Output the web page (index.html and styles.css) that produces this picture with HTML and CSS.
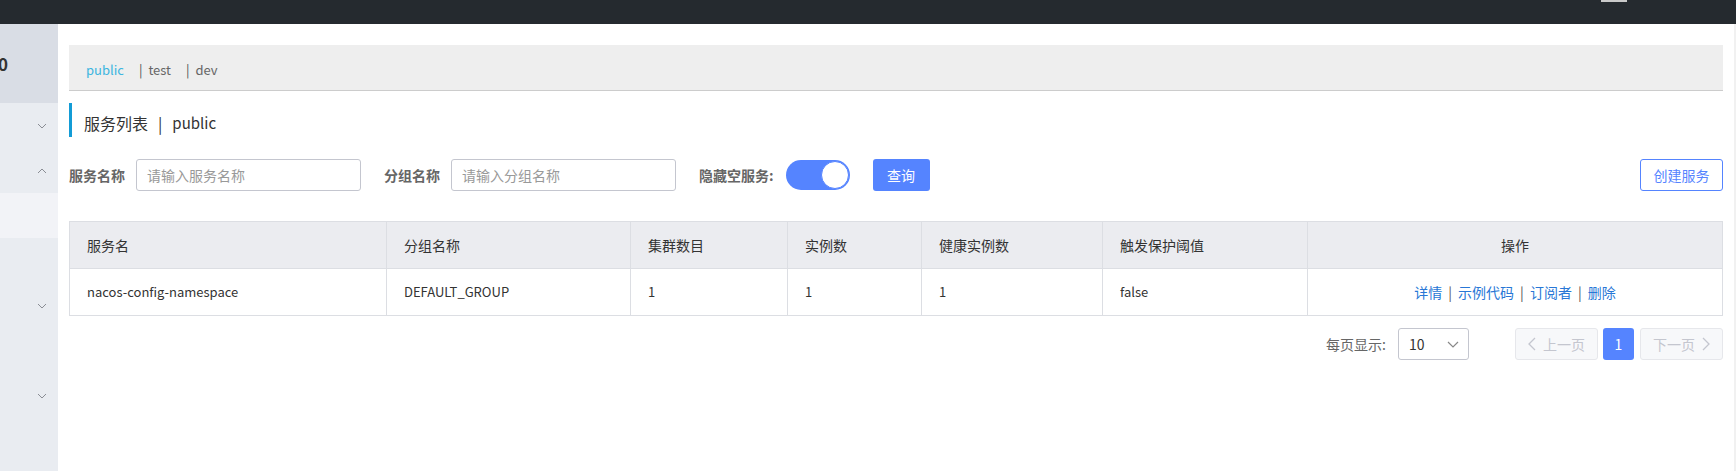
FILE: index.html
```html
<!DOCTYPE html>
<html lang="zh-CN">
<head>
<meta charset="utf-8">
<title>服务列表</title>
<link rel="stylesheet" href="styles.css">
</head>
<body>
<div class="topbar"><span class="top-ind"></span></div>
<div class="layout">
  <aside class="sidebar">
    <div class="sb-head"><span class="sb-ver">0</span></div>
    <div class="sb-item"><svg class="chev" viewBox="0 0 10 6"><polyline points="1,1 5,5 9,1"/></svg></div>
    <div class="sb-item"><svg class="chev" viewBox="0 0 10 6"><polyline points="1,5 5,1 9,5"/></svg></div>
    <div class="sb-item sb-sel"></div>
    <div class="sb-item"></div>
    <div class="sb-item"><svg class="chev" viewBox="0 0 10 6"><polyline points="1,1 5,5 9,1"/></svg></div>
    <div class="sb-item"></div>
    <div class="sb-item"><svg class="chev" viewBox="0 0 10 6"><polyline points="1,1 5,5 9,1"/></svg></div>
  </aside>
  <main class="main">
    <div class="nsbar">
      <span class="ns ns-active">public</span>
      <span class="ns"><span class="ns-sep">|</span>test</span>
      <span class="ns"><span class="ns-sep">|</span>dev</span>
    </div>
    <div class="title"><span>服务列表</span><span class="title-sep">|</span><span class="title-ns">public</span></div>
    <div class="search">
      <span class="label">服务名称</span>
      <div class="input"><span class="ph">请输入服务名称</span></div>
      <span class="label">分组名称</span>
      <div class="input"><span class="ph">请输入分组名称</span></div>
      <span class="label">隐藏空服务:</span>
      <span class="toggle"><span class="knob"></span></span>
      <span class="btn-primary">查询</span>
      <span class="spacer"></span>
      <span class="btn-outline">创建服务</span>
    </div>
    <table class="grid">
      <colgroup>
        <col class="c1"><col class="c2"><col class="c3"><col class="c4"><col class="c5"><col class="c6"><col class="c7">
      </colgroup>
      <thead>
        <tr><th>服务名</th><th>分组名称</th><th>集群数目</th><th>实例数</th><th>健康实例数</th><th>触发保护阈值</th><th class="center">操作</th></tr>
      </thead>
      <tbody>
        <tr>
          <td class="latin">nacos-config-namespace</td><td class="latin">DEFAULT_GROUP</td><td class="latin">1</td><td class="latin">1</td><td class="latin">1</td><td class="latin">false</td>
          <td class="center"><a class="lnk">详情</a><span class="lsep">|</span><a class="lnk">示例代码</a><span class="lsep">|</span><a class="lnk">订阅者</a><span class="lsep">|</span><a class="lnk">删除</a></td>
        </tr>
      </tbody>
    </table>
    <div class="pager">
      <span class="pg-label">每页显示:</span>
      <div class="select"><span class="sel-val">10</span><svg class="sel-chev" viewBox="0 0 12 7"><polyline points="1,1 6,6 11,1"/></svg></div>
      <span class="pg-btn pg-prev"><svg class="pg-chev" viewBox="0 0 8 14"><polyline points="7,1 1,7 7,13"/></svg>上一页</span>
      <span class="pg-num">1</span>
      <span class="pg-btn pg-next">下一页<svg class="pg-chev" viewBox="0 0 8 14"><polyline points="1,1 7,7 1,13"/></svg></span>
    </div>
  </main>
  <div class="vscroll"><div class="vthumb"></div></div>
</div>
</body>
</html>
```
FILE: styles.css
```css
* { box-sizing: border-box; }
html, body { margin: 0; padding: 0; }
body {
  width: 1736px;
  height: 471px;
  overflow: hidden;
  background: #fff;
  font-family: "Noto Sans CJK SC", "Noto Sans", sans-serif;
  font-size: 14px;
  color: #333;
}
.topbar {
  height: 24px;
  background: #252a2f;
  display: flex;
  padding-left: 1601px;
}
.top-ind {
  width: 26px;
  height: 2px;
  background: #c9c9c9;
}
.layout {
  display: flex;
  height: 447px;
}
.sidebar {
  width: 58px;
  background: #e9ecf1;
  overflow: hidden;
  flex: none;
}
.sb-head {
  height: 79px;
  background: #d9dde5;
  line-height: 79px;
  font-size: 17px;
  font-weight: bold;
  color: #333;
  white-space: nowrap;
  padding-left: 1px;
}
.sb-ver { margin-left: -3px; }
.sb-item {
  height: 45px;
  display: flex;
  align-items: center;
  padding-left: 37px;
}
.sb-sel { background: #f2f3f7; }
.chev {
  width: 10px;
  height: 6px;
  fill: none;
  stroke: #8a8d94;
  stroke-width: 1;
}
.main {
  flex: 1;
  padding: 21px 11px 0 11px;
}
.vscroll {
  width: 3px;
  background: #f1f1f1;
  flex: none;
}
.vthumb {
  margin-top: 22px;
  margin-left: 2px;
  width: 1px;
  height: 430px;
  background: #c6c6c6;
}
.nsbar {
  height: 46px;
  background: #eeeeee;
  border-bottom: 1px solid #cccccc;
  display: flex;
  align-items: center;
  padding-left: 17px;
  padding-top: 4px;
  color: #666;
  line-height: 20px;
  font-size: 13px;
}
.ns { margin-right: 15px; }
.ns-active { color: #3db5e0; }
.ns-sep { margin-right: 6px; color: #555; }
.title {
  margin-top: 12px;
  height: 34px;
  display: flex;
  align-items: center;
  padding-top: 6px;
  line-height: 22px;
  border-left: 3px solid #139cd6;
  padding-left: 12px;
  font-size: 16px;
  color: #333;
}
.title-sep { margin: 0 10px; }
.title-ns { font-size: 15px; }
.search {
  margin-top: 22px;
  height: 32px;
  display: flex;
  align-items: center;
}
.label {
  font-weight: bold;
  color: #666;
  margin-right: 11px;
  line-height: 20px;
}
.input {
  width: 225px;
  height: 32px;
  border: 1px solid #c4c6cf;
  border-radius: 3px;
  padding-left: 10px;
  display: flex;
  align-items: center;
  margin-right: 23px;
}
.ph { color: #999; line-height: 20px; }
.toggle {
  width: 64px;
  height: 30px;
  border-radius: 15px;
  background: #5584ff;
  display: flex;
  justify-content: flex-end;
  align-items: center;
  padding-right: 1px;
  margin-left: 1px;
  margin-right: 23px;
}
.knob {
  width: 28px;
  height: 28px;
  border-radius: 50%;
  background: #fff;
  border: 1px solid #5584ff;
}
.btn-primary {
  width: 57px;
  height: 32px;
  background: #5584ff;
  color: #fff;
  border-radius: 3px;
  display: flex;
  align-items: center;
  justify-content: center;
}
.spacer { flex: 1; }
.btn-outline {
  width: 83px;
  height: 32px;
  border: 1px solid #5584ff;
  color: #5584ff;
  border-radius: 3px;
  display: flex;
  align-items: center;
  justify-content: center;
}
.grid {
  margin-top: 30px;
  width: 1653px;
  border-collapse: collapse;
  table-layout: fixed;
  border: 1px solid #dcdee3;
}
.c1 { width: 317px; }
.c2 { width: 244px; }
.c3 { width: 157px; }
.c4 { width: 134px; }
.c5 { width: 181px; }
.c6 { width: 205px; }
.c7 { width: 415px; }
.grid th, .grid td {
  border: 1px solid #dcdee3;
  text-align: left;
  padding: 0 0 0 17px;
  height: 47px;
  font-weight: normal;
  color: #333;
  line-height: 20px;
}
.grid th { background: #ebecf0; }
.grid td.latin { font-size: 13px; }
.grid .center { text-align: center; padding-left: 0; }
.lnk { color: #2877d6; }
.lsep { margin: 0 6px; color: #555; }
.pager {
  margin-top: 12px;
  height: 32px;
  display: flex;
  justify-content: flex-end;
  align-items: center;
}
.pg-label { color: #666; margin-right: 12px; line-height: 20px; }
.select {
  width: 71px;
  height: 32px;
  border: 1px solid #c4c6cf;
  border-radius: 3px;
  display: flex;
  align-items: center;
  padding-left: 10px;
  padding-right: 9px;
  justify-content: space-between;
  margin-right: 46px;
}
.sel-val { color: #333; }
.sel-chev {
  width: 12px;
  height: 7px;
  fill: none;
  stroke: #888;
  stroke-width: 1.2;
}
.pg-btn {
  width: 83px;
  height: 32px;
  background: #f7f8fa;
  border: 1px solid #e6e7eb;
  border-radius: 3px;
  color: #c4c6cf;
  display: flex;
  align-items: center;
  justify-content: center;
  gap: 7px;
}
.pg-chev {
  width: 8px;
  height: 14px;
  fill: none;
  stroke: #c4c6cf;
  stroke-width: 1.3;
}
.pg-num {
  width: 31px;
  height: 32px;
  margin: 0 6px 0 5px;
  background: #5584ff;
  color: #fff;
  border-radius: 3px;
  display: flex;
  align-items: center;
  justify-content: center;
}
```
